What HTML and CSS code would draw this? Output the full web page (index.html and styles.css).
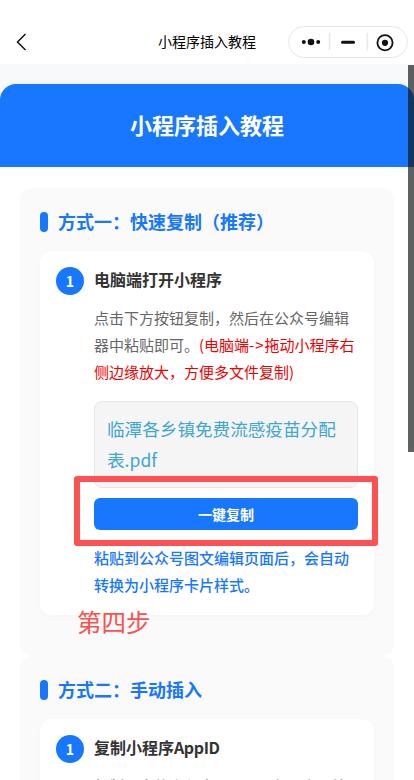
FILE: index.html
```html
<!DOCTYPE html>
<html lang="zh-CN">
<head>
    <meta charset="UTF-8">
    <meta name="viewport" content="width=device-width, initial-scale=1.0">
    <title>小程序插入教程</title>
    <link rel="stylesheet" href="styles.css">
</head>
<body>
    <div class="navbar">
        <svg class="back" width="12" height="20" viewBox="0 0 12 20">
            <path d="M9.5 2 L1.5 10 L9.5 18" fill="none" stroke="#111" stroke-width="1.5"/>
        </svg>
        <div class="nav-title">小程序插入教程</div>
        <div class="capsule">
            <svg width="118" height="30" viewBox="0 0 118 30">
                <g fill="#111">
                    <circle cx="14.8" cy="15" r="2"/>
                    <circle cx="22" cy="15" r="3.3"/>
                    <circle cx="29.2" cy="15" r="2"/>
                    <rect x="52" y="13.8" width="14" height="3" rx="1.5"/>
                    <circle cx="96" cy="15.8" r="3.1"/>
                </g>
                <circle cx="96" cy="15.8" r="7.6" fill="none" stroke="#111" stroke-width="1.8"/>
                <path d="M40.5 6 V23 M78.5 6 V23" stroke="#e8e8e8" stroke-width="1.5"/>
            </svg>
        </div>
    </div>

    <div class="container">
        <div class="header">
            <h1>小程序插入教程</h1>
        </div>
        <div class="content">
            <div class="section">
                <h2 class="section-title">方式一：快速复制（推荐）</h2>
                <div class="step">
                    <div class="step-number">1</div>
                    <div class="step-body">
                        <h3>电脑端打开小程序</h3>
                        <p>点击下方按钮复制，然后在公众号编辑器中粘贴即可。<span class="warn">(电脑端<span class="arrow">-&gt;</span>拖动小程序右侧边缘放大，方便多文件复制)</span></p>
                        <div class="file-box">临潭各乡镇免费流感疫苗分配表.pdf</div>
                        <div class="copy-area">
                            <button class="copy-btn">一键复制</button>
                            <div class="mark"></div>
                        </div>
                        <p class="tip">粘贴到公众号图文编辑页面后，会自动转换为小程序卡片样式。</p>
                    </div>
                    <div class="mark-label">第四步</div>
                </div>
            </div>

            <div class="section">
                <h2 class="section-title">方式二：手动插入</h2>
                <div class="step">
                    <div class="step-number">1</div>
                    <div class="step-body">
                        <h3>复制小程序<span class="latin">AppID</span></h3>
                        <p>复制下方的小程序AppID，在公众号编辑器中使用</p>
                    </div>
                </div>
            </div>
        </div>
    </div>
    <div class="scrollbar"></div>
</body>
</html>
```
FILE: styles.css
```css
* {
    box-sizing: border-box;
    margin: 0;
    padding: 0;
}
html {
    height: 780px;
    overflow: hidden;
}
body {
    position: relative;
    height: 780px;
    overflow: hidden;
    font-family: "Noto Sans CJK SC", sans-serif;
    background-color: #f8f9fb;
    color: #333;
}
.navbar {
    display: flex;
    align-items: center;
    justify-content: space-between;
    height: 64px;
    padding: 20px 6px 0 16px;
    background: #fff;
}
.back {
    width: 12px;
}
.nav-title {
    margin: -2px 0 0 130px;
    flex: 1;
    font-size: 14px;
    line-height: 20px;
    color: #000;
}
.capsule {
    width: 120px;
    height: 32px;
    border: 1px solid #e8e8e8;
    border-radius: 16px;
}
.capsule svg {
    display: block;
}
.container {
    margin-top: 20px;
    background: #fff;
    border-radius: 16px;
    overflow: hidden;
    box-shadow: 0 2px 12px rgba(0, 0, 0, 0.05);
}
.header {
    height: 83px;
    background: #1777ff;
    color: #fff;
    text-align: center;
}
.header h1 {
    font-size: 22px;
    line-height: 81px;
}
.content {
    padding: 21px 20px;
}
.section {
    padding: 20px;
    background: #fafafa;
    border-radius: 12px;
}
.section-title {
    display: flex;
    align-items: center;
    height: 27px;
    margin-bottom: 16px;
    font-size: 18px;
    line-height: 25px;
    padding-bottom: 1px;
    color: #1777ff;
}
.section-title::before {
    content: "";
    width: 8px;
    height: 20px;
    margin: 1px 10px 0 0;
    background: #1777ff;
    border-radius: 4px;
}
.step {
    position: relative;
    display: flex;
    gap: 10px;
    margin-bottom: 21px;
    padding: 16px;
    background: #fff;
    border-radius: 12px;
    box-shadow: 0 2px 8px rgba(0, 0, 0, 0.02);
}
.step-number {
    flex: none;
    width: 28px;
    height: 28px;
    border-radius: 50%;
    background: #1777ff;
    color: #fff;
    font-size: 14px;
    font-weight: bold;
    line-height: 28px;
    text-align: center;
}
.step-body {
    flex: 1;
}
.step-body h3 {
    height: 28px;
    margin-bottom: 9px;
    font-size: 16px;
    font-weight: bold;
    line-height: 25px;
}
.latin {
    letter-spacing: -0.4px;
}
.step-body p {
    font-size: 15px;
    line-height: 27px;
    color: #666;
}
.step-body .warn {
    color: #f00000;
}
.arrow {
    letter-spacing: 0.9px;
}
.step-body .tip {
    margin-top: 14px;
    padding-bottom: 1px;
    color: #1777ff;
    font-weight: 500;
}
.file-box {
    height: 87px;
    margin-top: 16px;
    padding: 11px 12px;
    border: 1px solid #e6e6e6;
    border-radius: 8px;
    background: #f5f5f5;
    color: #3fa6d2;
    font-size: 17.6px;
    line-height: 31px;
}
.copy-area {
    position: relative;
    margin-top: 10px;
}
.copy-btn {
    display: block;
    width: 100%;
    height: 32px;
    border: none;
    border-radius: 6px;
    background: #1777ff;
    color: #fff;
    font-family: inherit;
    font-size: 14px;
    font-weight: bold;
}
/* red frame round the copy button */
.mark {
    position: absolute;
    top: -22px;
    left: -20px;
    right: -20px;
    height: 70px;
    border: 6px solid #ff5151;
    border-radius: 3px;
}
.mark-label {
    position: absolute;
    left: 37px;
    bottom: -25px;
    color: #f9514f;
    font-size: 24.5px;
    line-height: 36px;
}
.scrollbar {
    position: absolute;
    top: 65px;
    right: 0;
    width: 6px;
    height: 387px;
    background: rgba(18, 22, 22, 0.68);
}
```
